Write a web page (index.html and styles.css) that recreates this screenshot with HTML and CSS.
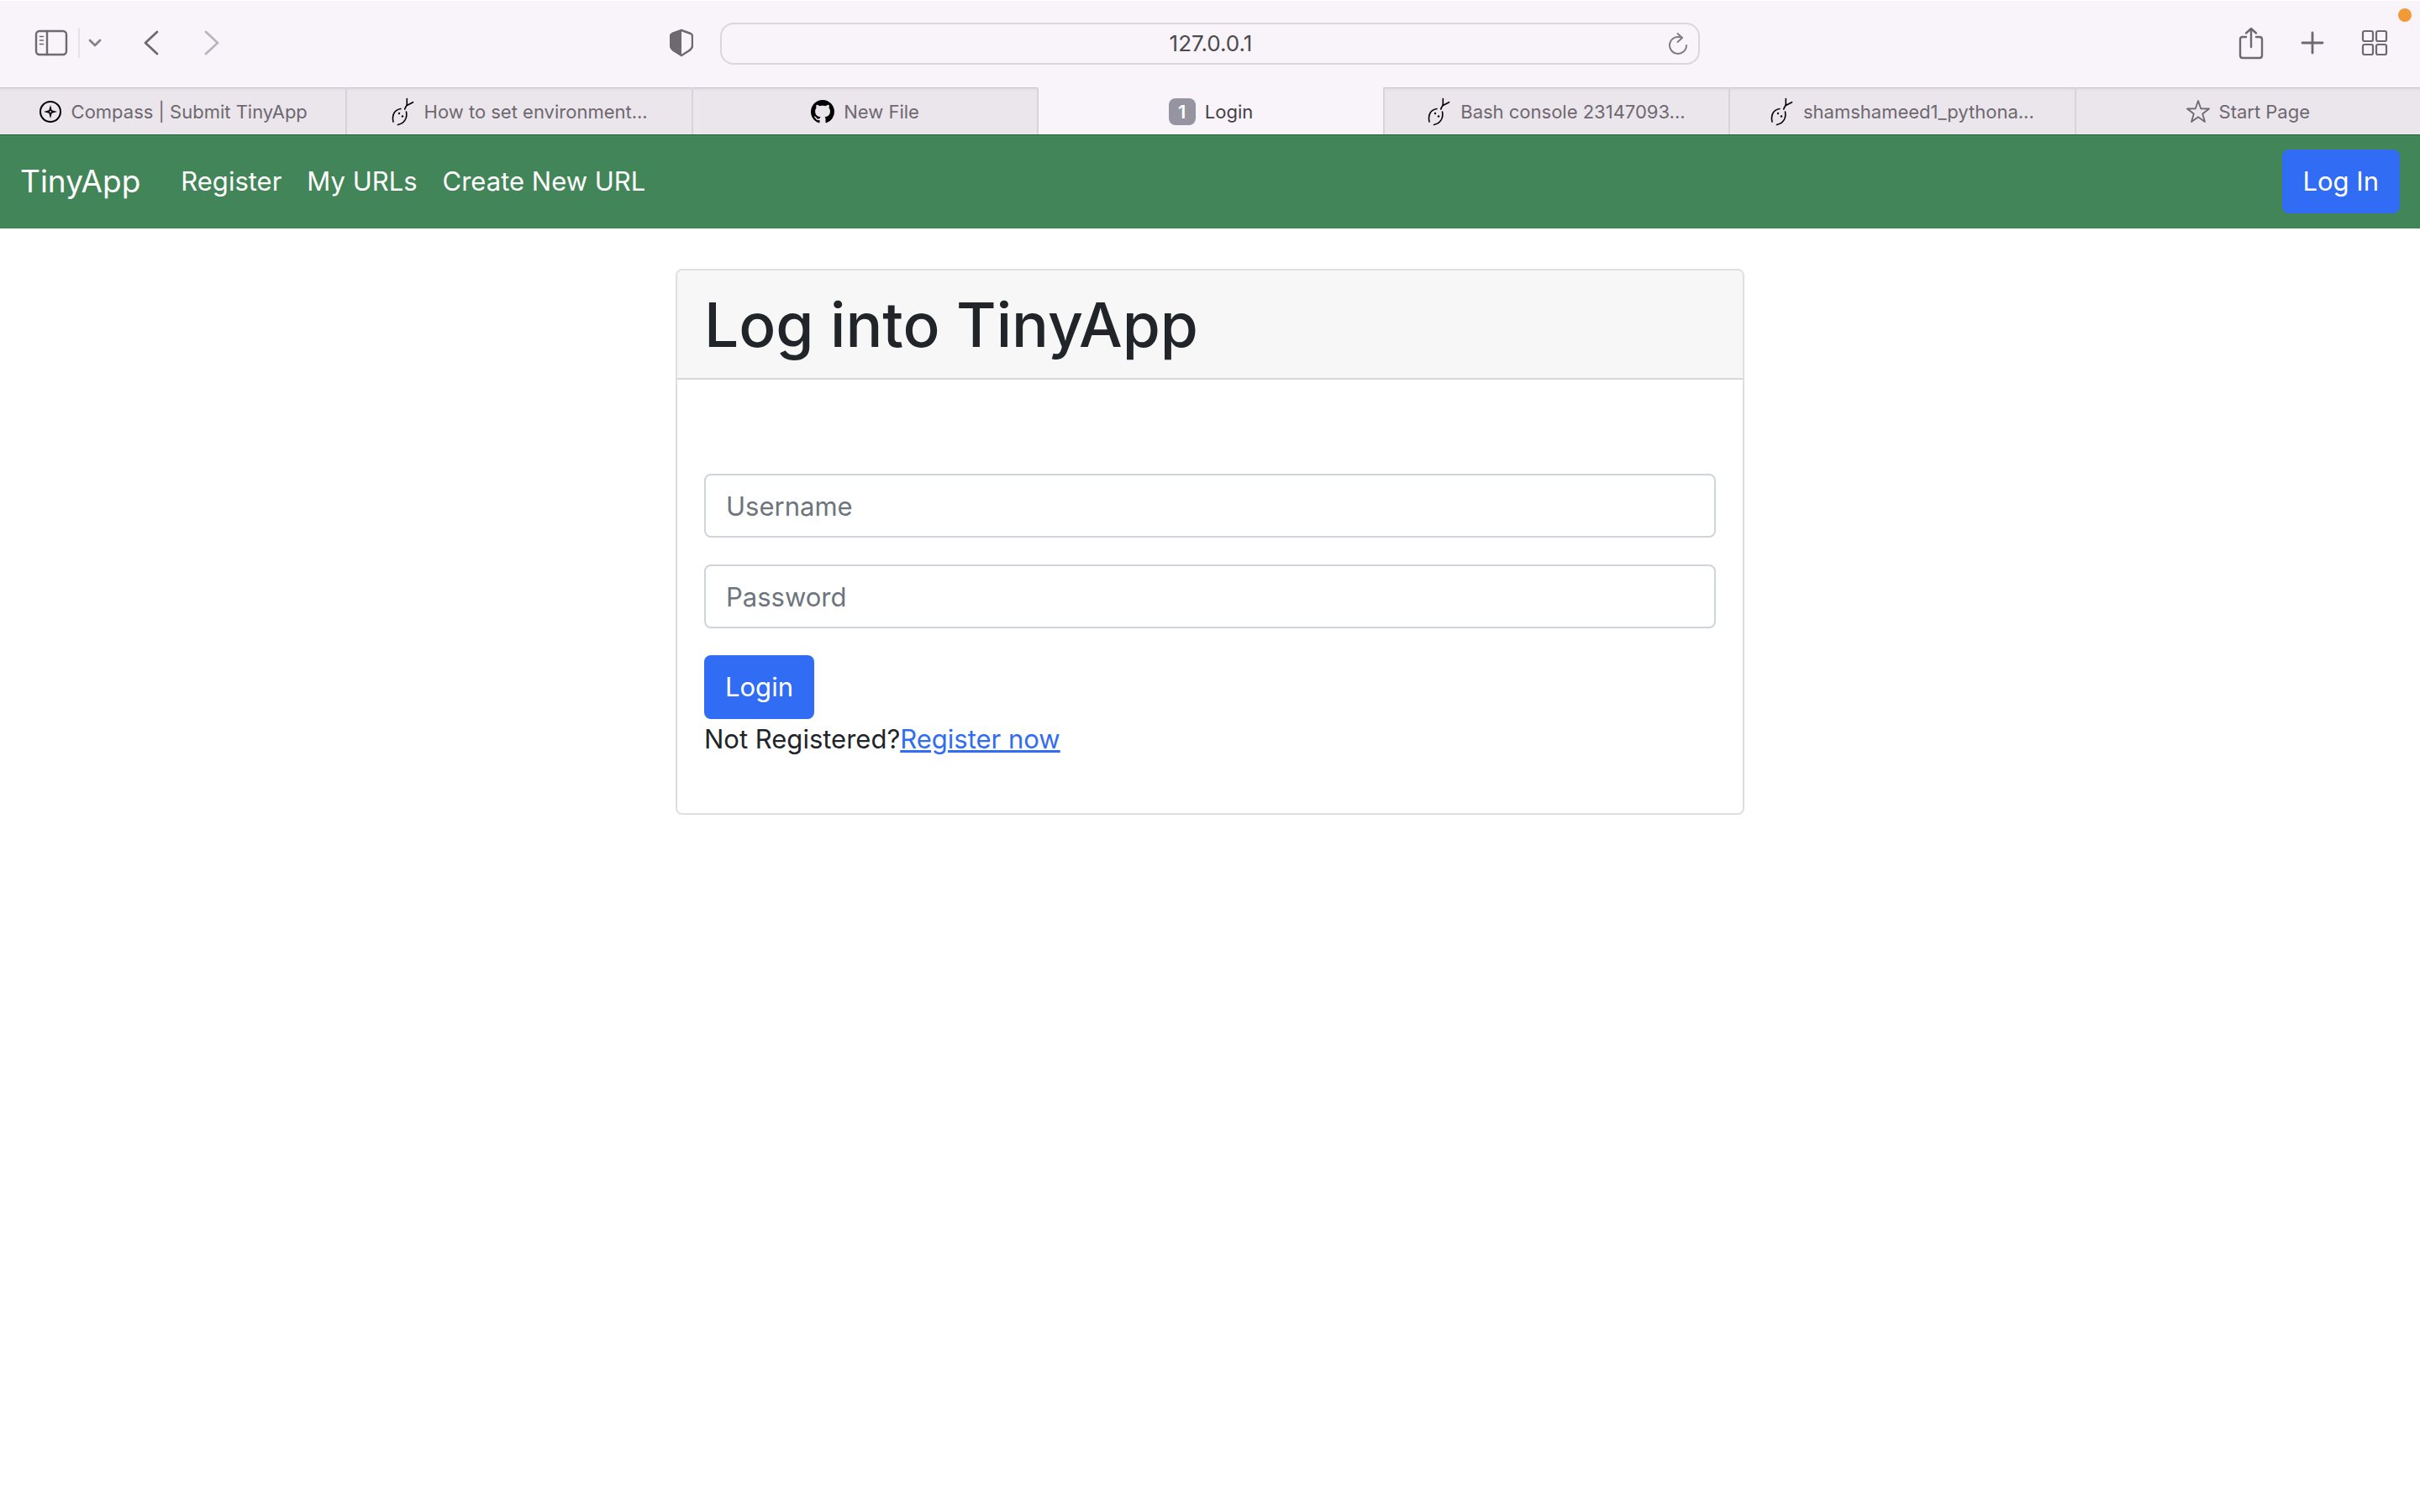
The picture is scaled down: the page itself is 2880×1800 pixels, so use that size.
FILE: index.html
```html
<!DOCTYPE html>
<html lang="en">
<head>
<meta charset="utf-8">
<title>Login</title>
<link rel="stylesheet" href="styles.css">
</head>
<body>
<svg class="defs" aria-hidden="true">
  <symbol id="snake" viewBox="0 0 28 34">
    <g fill="none" stroke="#000" stroke-width="1.6" stroke-linecap="round">
      <path d="M2 29C0 20 4 14.500 11 13.500"/>
      <path d="M17.500 17C19 25 15 31 7.500 32.500"/>
      <path d="M15.700 14C16.500 11 18.300 10 18.300 8V1.500M18.300 9.500L25.500 5.700"/>
    </g>
    <circle cx="9" cy="19" r="1.200"/><circle cx="13" cy="22.500" r="1.200"/>
  </symbol>
</svg>

<header class="browser">
  <div class="toolbar">
    <div class="tools">
      <button class="tool" aria-label="Sidebar"><svg width="40" height="32" viewBox="0 0 40 32" fill="none" stroke="currentColor" stroke-width="2.4" stroke-linecap="round"><rect x="2" y="2" width="36" height="28" rx="4"/><path d="M15 2v28"/><path d="M6.500 8.500h4M6.500 13h4M6.500 17.500h4" stroke-width="1.600"/></svg></button>
      <span class="rule"></span>
      <button class="tool tool-menu" aria-label="Tab groups"><svg width="16" height="12" viewBox="0 0 16 12" fill="none" stroke="#85828c" stroke-width="2.800" stroke-linecap="round" stroke-linejoin="round"><path d="M2 3l6 6 6-6"/></svg></button>
      <button class="tool tool-back" aria-label="Back"><svg width="18" height="30" viewBox="0 0 18 30" fill="none" stroke="currentColor" stroke-width="2.800" stroke-linecap="round" stroke-linejoin="round"><path d="M16 2L2 15l14 13"/></svg></button>
      <button class="tool tool-forward" aria-label="Forward" disabled><svg width="18" height="30" viewBox="0 0 18 30" fill="none" stroke="currentColor" stroke-width="2.800" stroke-linecap="round" stroke-linejoin="round"><path d="M2 2l14 13L2 28"/></svg></button>
      <button class="tool tool-privacy" aria-label="Privacy report"><svg width="28" height="34" viewBox="0 0 28 34" fill="none" stroke="currentColor" stroke-width="2.400" stroke-linejoin="round"><path d="M14 2l11 4q2 1 2 3v11q0 4-5 7l-8 5-8-5q-5-3-5-7V9q0-2 2-3z"/><path d="M14 2L3 6Q1 7 1 9v11q0 4 5 7l8 5z" fill="currentColor" stroke="none"/></svg></button>
    </div>
    <div class="address">
      <input class="address-input" type="text" value="127.0.0.1" aria-label="Address">
      <button class="reload" aria-label="Reload"><svg width="24" height="28" viewBox="0 0 24 28" fill="none" stroke="currentColor" stroke-width="2" stroke-linecap="round" stroke-linejoin="round"><path d="M22 16A10 10 0 1 1 16.500 7"/><path d="M11.500 2l5.500 5-5.500 5"/></svg></button>
    </div>
    <div class="tools tools-end">
      <button class="tool" aria-label="Share"><svg width="30" height="40" viewBox="0 0 30 40" fill="none" stroke="currentColor" stroke-width="2.400" stroke-linecap="round" stroke-linejoin="round"><path d="M9 13H5q-3 0-3 3v19q0 3 3 3h20q3 0 3-3V16q0-3-3-3h-4"/><path d="M15 25V3M9 8.500L15 3l6 5.500"/></svg></button>
      <button class="tool" aria-label="New tab"><svg width="28" height="28" viewBox="0 0 28 28" stroke="currentColor" stroke-width="2.800" stroke-linecap="round"><path d="M14 2v24M2 14h24"/></svg></button>
      <button class="tool" aria-label="Tab overview"><svg width="32" height="32" viewBox="0 0 32 32" fill="none" stroke="currentColor" stroke-width="2.200"><rect x="2" y="2" width="12" height="12" rx="2"/><rect x="18" y="2" width="12" height="12" rx="2"/><rect x="2" y="18" width="12" height="12" rx="2"/><rect x="18" y="18" width="12" height="12" rx="2"/></svg></button>
    </div>
    <span class="mic-dot"></span>
  </div>
  <nav class="tabs" aria-label="Tabs">
    <a class="tab" href="#"><svg width="28" height="28" viewBox="0 0 28 28"><circle cx="14" cy="14" r="12" fill="none" stroke="#000" stroke-width="2"/><path fill-rule="evenodd" d="M14 6l1.700 6.300L22 14l-6.300 1.700L14 22l-1.700-6.300L6 14l6.300-1.700zM14 12.800l-1.200 1.200 1.200 1.200 1.200-1.200z"/></svg>Compass | Submit TinyApp</a>
    <a class="tab" href="#"><svg width="28" height="34"><use href="#snake"/></svg>How to set environment...</a>
    <a class="tab" href="#"><svg width="28" height="28" viewBox="0 0 16 16"><path d="M8 0C3.580 0 0 3.580 0 8c0 3.540 2.290 6.530 5.470 7.590.4.070.550-.170.550-.380 0-.190-.010-.820-.010-1.490-2.010.370-2.530-.490-2.690-.940-.090-.230-.480-.940-.820-1.130-.280-.150-.680-.520-.010-.530.630-.010 1.080.580 1.230.820.720 1.210 1.870.870 2.330.660.070-.520.280-.870.510-1.070-1.780-.2-3.640-.890-3.640-3.950 0-.870.310-1.590.820-2.150-.080-.2-.360-1.020.080-2.120 0 0 .670-.210 2.200.820.640-.180 1.320-.270 2-.270s1.360.090 2 .270c1.530-1.040 2.200-.820 2.200-.820.440 1.100.160 1.920.080 2.120.510.560.820 1.270.820 2.150 0 3.070-1.870 3.750-3.650 3.950.290.250.540.730.540 1.480 0 1.070-.010 1.930-.010 2.200 0 .210.150.460.550.380A8.010 8.010 0 0 0 16 8c0-4.420-3.580-8-8-8z"/></svg>New File</a>
    <a class="tab tab-active" href="#" aria-current="page"><span class="badge">1</span>Login</a>
    <a class="tab" href="#"><svg width="28" height="34"><use href="#snake"/></svg>Bash console 23147093...</a>
    <a class="tab" href="#"><svg width="28" height="34"><use href="#snake"/></svg>shamshameed1_pythona...</a>
    <a class="tab" href="#"><svg width="28" height="28" viewBox="0 0 28 28" fill="none" stroke="currentColor" stroke-width="1.800" stroke-linejoin="round"><path d="M14 1l3.200 9.300L27 10.500l-7.800 6L22 26l-8-5.700L6 26l2.800-9.500L1 10.500l9.800-.2z"/></svg>Start Page</a>
  </nav>
</header>

<nav class="navbar" aria-label="TinyApp">
  <a class="brand" href="#">TinyApp</a>
  <ul class="links">
    <li><a href="#">Register</a></li>
    <li><a href="#">My URLs</a></li>
    <li><a href="#">Create New URL</a></li>
  </ul>
  <button class="btn btn-nav">Log In</button>
</nav>

<main class="page">
  <section class="card">
    <h1 class="card-header">Log into TinyApp</h1>
    <div class="card-body">
      <form class="form">
        <input class="field" type="text" placeholder="Username" aria-label="Username">
        <input class="field" type="password" placeholder="Password" aria-label="Password">
        <button class="btn" type="button">Login</button>
      </form>
      <p class="note">Not Registered?<a href="#">Register now</a></p>
    </div>
  </section>
</main>
</body>
</html>
```

FILE: styles.css
```css
* { box-sizing: border-box; }

body {
  margin: 0;
  background: #fff;
  color: #212529;
  font: 31px/48px Inter, "Liberation Sans", sans-serif;
}

svg { display: block; flex: none; }
button, input { font: inherit; }
button { cursor: pointer; }
.defs { position: absolute; width: 0; height: 0; }

/* Browser chrome */
.toolbar {
  position: relative;
  display: grid;
  grid-template-columns: 1fr 40.5% 1fr;
  align-items: center;
  height: 104px;
  background: #f8f4fa;
  box-shadow: inset 0 1px #fff;
}

.tools {
  display: flex;
  align-items: center;
  padding: 0 32px 2px 41px;
}

.tools-end {
  justify-content: flex-end;
  gap: 44px;
  padding: 0 38px 2px;
}

.tool {
  padding: 0;
  border: 0;
  background: none;
  color: #6e6870;
}
.tool:disabled { color: #bab5bd; }
.tool-menu { margin-left: 10px; }
.tool-back { margin-left: 50px; }
.tool-forward { margin-left: 54px; }
.tool-privacy { margin-left: auto; }

.rule {
  width: 2px;
  height: 36px;
  margin-left: 12px;
  background: #e6e2e9;
}

.address {
  display: flex;
  align-items: center;
  height: 50px;
  padding: 0 12px 0 38px;
  border: 2px solid #dbd6dd;
  border-radius: 16px;
}

.address-input {
  flex: 1;
  min-width: 0;
  padding: 0;
  border: 0;
  background: none;
  color: #4c4a4d;
  font-size: 26px;
  line-height: 32px;
  text-align: center;
}

.reload {
  padding: 0;
  border: 0;
  background: none;
  color: #807d83;
}

.mic-dot {
  position: absolute;
  top: 10px;
  right: 10px;
  width: 16px;
  height: 16px;
  border-radius: 50%;
  background: #f19a37;
}

.tabs {
  display: grid;
  grid-template-columns: repeat(7, 1fr);
  height: 56px;
}

.tab {
  display: flex;
  align-items: center;
  justify-content: center;
  gap: 11px;
  padding-top: 2px;
  border-left: 2px solid #d8d3da;
  background: linear-gradient(#c9c4cb 1px, #e0dbe2 1px, #ebe6ec 5px);
  color: #6e6870;
  font-size: 22px;
  line-height: 32px;
  text-decoration: none;
  white-space: nowrap;
}
.tab:first-child { border-left: 0; }

.tab-active {
  background: #f8f4fa;
  color: #443e46;
}

.badge {
  width: 32px;
  border-radius: 8px;
  background: #9594a0;
  color: #fff;
  font-weight: 600;
  text-align: center;
}

/* Site navigation */
.navbar {
  display: flex;
  align-items: center;
  height: 112px;
  padding: 0 24px;
  background: #428558;
  box-shadow: inset 0 1px #1f6637;
}

.navbar a { color: #fff; text-decoration: none; }
.navbar .brand { font-size: 37px; }

.links {
  display: flex;
  gap: 30px;
  margin: 0 0 0 48px;
  padding: 0;
  list-style: none;
}

.btn {
  height: 76px;
  padding: 0 25px;
  border: 0;
  border-radius: 8px;
  background: #316cf4;
  color: #fff;
}
.btn-nav { margin-left: auto; }

/* Login card */
.page { padding: 48px 24px; }

.card {
  max-width: 1272px;
  margin: 0 auto;
  border: 2px solid #dfdfdf;
  border-radius: 8px;
}

.card-header {
  margin: 0;
  padding: 17px 32px 15px;
  border-bottom: 2px solid #d8d8d8;
  border-radius: 6px 6px 0 0;
  background: #f7f7f7;
  font-size: 73px;
  font-weight: 600;
  line-height: 96px;
  font-weight: 500;
}

.card-body { padding: 112px 32px 64px; }

.form {
  display: flex;
  flex-direction: column;
  align-items: flex-start;
  gap: 32px;
}

.field {
  width: 100%;
  height: 76px;
  padding: 0 24px;
  border: 2px solid #ced4da;
  border-radius: 8px;
  background: #fff;
  color: #212529;
}
.field::placeholder { color: #6c757d; opacity: 1; }

.note { margin: 0; }
.note a { color: #316cf4; }
```
